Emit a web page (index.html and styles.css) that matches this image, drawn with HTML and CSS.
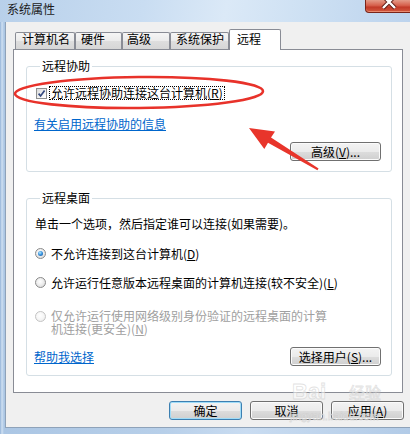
FILE: index.html
```html
<!DOCTYPE html>
<html lang="zh-CN">
<head>
<meta charset="utf-8">
<title>系统属性</title>
<link rel="stylesheet" href="styles.css">
</head>
<body>
<div class="window">
  <div class="titlebar">
    <span class="title">系统属性</span>
    <div class="close">
      <svg width="50" height="13" viewBox="0 0 50 13">
        <path d="M18 -4 L30 8 M30 -4 L18 8" stroke="#5a1a12" stroke-width="4.2" fill="none"/>
        <path d="M18 -4 L30 8 M30 -4 L18 8" stroke="#ffffff" stroke-width="2.4" fill="none"/>
      </svg>
    </div>
  </div>
  <div class="client">
    <div class="tabs">
      <div class="tab w1">计算机名</div>
      <div class="tab w2">硬件</div>
      <div class="tab w3">高级</div>
      <div class="tab w4">系统保护</div>
      <div class="tab w5 active">远程</div>
    </div>
    <div class="panel">
      <fieldset class="group g1">
        <legend>远程协助</legend>
        <div class="check-row">
          <span class="checkbox"><svg width="9" height="9" viewBox="0 0 9 9"><path d="M1.6 4.6 L3.6 7 L7.6 1.6" fill="none" stroke="#34497f" stroke-width="1.7"/></svg></span>
          <span class="focus">允许远程协助连接这台计算机(<u>R</u>)</span>
        </div>
        <a class="link l1" href="#">有关启用远程协助的信息</a>
        <div class="btn-row"><button class="btn adv">高级(<u>V</u>)...</button></div>
      </fieldset>
      <fieldset class="group g2">
        <legend>远程桌面</legend>
        <div class="hint">单击一个选项，然后指定谁可以连接(如果需要)。</div>
        <div class="radio-row r1"><span class="radio on"></span><span class="rlabel">不允许连接到这台计算机(<u>D</u>)</span></div>
        <div class="radio-row r2"><span class="radio"></span><span class="rlabel">允许运行任意版本远程桌面的计算机连接(较不安全)(<u>L</u>)</span></div>
        <div class="radio-row r3 disabled"><span class="radio"></span><span class="rlabel wrap">仅允许运行使用网络级别身份验证的远程桌面的计算机连接(更安全)(<u>N</u>)</span></div>
        <div class="bottom-row">
          <a class="link" href="#">帮助我选择</a>
          <button class="btn sel">选择用户(<u>S</u>)...</button>
        </div>
      </fieldset>
    </div>
    <div class="footer">
      <button class="btn fbtn default">确定</button>
      <button class="btn fbtn">取消</button>
      <button class="btn fbtn">应用(<u>A</u>)</button>
    </div>
  </div>
  <svg class="annot" width="410" height="434" viewBox="0 0 410 434">
    <ellipse cx="139" cy="92.5" rx="124" ry="15.5" fill="none" stroke="#e8322a" stroke-width="2.6" transform="rotate(-0.6 139 92.5)"/>
    <polygon points="249,128 275,131.5 271,137.6 318.6,168.4 317.4,170.2 268,142.8 264.3,149" fill="#e8352b"/>
    <g class="wm">
      <text x="292" y="399" class="wm-big">Bai</text>
      <text x="349" y="399" class="wm-cn">经验</text>
      <text x="290" y="420" class="wm-small">jingyan.baidu.com</text>
    </g>
  </svg>
</div>
</body>
</html>
```
FILE: styles.css
```css
html, body {
  margin: 0;
  padding: 0;
}
body {
  width: 410px;
  height: 434px;
  overflow: hidden;
  font-family: "Noto Sans CJK SC", "Noto Sans", sans-serif;
  font-size: 12px;
  color: #000;
}
.window {
  position: relative;
  width: 410px;
  height: 434px;
  display: flex;
  flex-direction: column;
  overflow: hidden;
  background: linear-gradient(90deg, #93b3d8 0px, #cfe0f2 2px, #abc6e4 4px, #b7cfe9 40%, #c9dcf1 60%, #b2cbe7 100%);
}
.titlebar {
  height: 22px;
  flex: none;
  display: flex;
  padding-left: 7px;
  overflow: hidden;
  background: linear-gradient(100deg, #b8d0ea 0%, #c9ddf2 35%, #dbe9f7 55%, #cde0f3 75%, #bcd3ed 100%);
}
.title {
  line-height: 14px;
  padding-top: 2px;
  color: #1b1b1b;
}
.close {
  margin-left: auto;
  margin-right: -5px;
  width: 50px;
  height: 13px;
  align-self: flex-start;
  box-sizing: border-box;
  border: 1px solid #7a2419;
  border-top: none;
  border-radius: 0 0 0 4px;
  background: linear-gradient(#e49b88 0%, #d6604c 45%, #c23a28 60%, #d25a40 100%);
  box-shadow: inset 0 -1px 0 #e88a70;
}
.close svg {
  display: block;
  margin-left: -1px;
}
.client {
  flex: 1;
  margin-left: 5px;
  margin-bottom: 6px;
  border-left: 1px solid #8ea2b9;
  border-bottom: 1px solid #8ea2b9;
  background: #f0f0f0;
  padding: 7px 7px 7px 7px;
  display: flex;
  flex-direction: column;
}
.tabs {
  display: flex;
  align-items: flex-end;
  height: 20px;
  padding-left: 2px;
}
.tab {
  box-sizing: border-box;
  height: 17px;
  border: 1px solid #898c95;
  border-bottom: none;
  border-radius: 2px 2px 0 0;
  background: linear-gradient(#f5f5f5 0%, #ebebeb 50%, #dedede 51%, #d6d6d6 100%);
  line-height: 12px;
  padding-left: 5px;
  white-space: nowrap;
}
.w1 { width: 60px; padding-left: 6px; }
.w2 { width: 47px; }
.w3 { width: 48px; padding-left: 4px; }
.w4 { width: 59px; }
.w5 { width: 52px; }
.tab.active {
  height: 21px;
  margin-bottom: -1px;
  background: #ffffff;
  position: relative;
  z-index: 1;
  padding-top: 3px;
  padding-left: 7px;
}
.panel {
  border: 1px solid #898c95;
  background: #ffffff;
  padding: 0 0 16px 0;
}
.group {
  margin: 0 10px 0 12px;
  padding: 0 10px 0 8px;
  border: 1px solid #d5dfe5;
  border-radius: 3px;
  min-width: 0;
}
.group legend {
  margin-left: 5px;
  padding: 0 2px;
  line-height: 12px;
}
.g1 {
  margin-top: 10px;
  padding-bottom: 10px;
}
.g2 {
  margin-top: 20px;
  padding-bottom: 9px;
}
.check-row {
  margin-top: 14px;
  height: 14px;
  display: flex;
  align-items: center;
}
.checkbox {
  width: 11px;
  height: 11px;
  box-sizing: border-box;
  margin-left: 1px;
  border: 1px solid #8e8f8f;
  background: linear-gradient(135deg, #d9d9d9 0%, #f4f4f4 60%, #ffffff 100%);
  display: flex;
  align-items: center;
  justify-content: center;
}
.checkbox svg {
  display: block;
}
.focus {
  margin-left: 2px;
  border: 1px dotted #000;
  padding: 0 1px;
  line-height: 12px;
  white-space: nowrap;
}
.link {
  display: block;
  color: #0066cc;
  text-decoration: underline;
  line-height: 14px;
  margin-left: -1px;
  width: max-content;
}
.l1 {
  margin-top: 17px;
}
.btn-row {
  margin-top: 11px;
  display: flex;
  justify-content: flex-end;
}
.btn {
  box-sizing: border-box;
  height: 19px;
  margin: 0;
  padding: 0;
  border: 1px solid #707070;
  border-radius: 3px;
  background: linear-gradient(#f3f3f3 0%, #ebebeb 50%, #dddddd 51%, #cfcfcf 100%);
  box-shadow: inset 0 0 0 1px #fbfbfb;
  font-family: "Noto Sans CJK SC", "Noto Sans", sans-serif;
  font-size: 12px;
  line-height: 14px;
  color: #000;
  white-space: nowrap;
}
.adv, .sel {
  width: 91px;
}
.hint {
  margin-top: 13px;
  line-height: 14px;
  white-space: nowrap;
}
.radio-row {
  display: flex;
  align-items: flex-start;
  line-height: 14px;
}
.r1 { margin-top: 16px; }
.r2 { margin-top: 15px; }
.r3 { margin-top: 19px; line-height: 13px; }
.radio {
  flex: none;
  width: 11px;
  height: 11px;
  box-sizing: border-box;
  margin-top: 1px;
  border-radius: 50%;
  border: 1px solid #8a8a8a;
  background: radial-gradient(circle at 45% 40%, #ffffff 0%, #f0f0f0 40%, #d2d2d2 100%);
  display: flex;
  align-items: center;
  justify-content: center;
}
.r3 .radio {
  margin-top: 2px;
}
.radio.on::after {
  content: "";
  width: 5px;
  height: 5px;
  border-radius: 50%;
  background: radial-gradient(circle at 40% 35%, #b8ecff 0%, #3b95e0 45%, #0d4d94 100%);
}
.rlabel {
  margin-left: 5px;
  white-space: nowrap;
}
.rlabel.wrap {
  white-space: normal;
  width: 280px;
}
.disabled {
  color: #a0a0a0;
}
.disabled .radio {
  border-color: #c4c4c4;
  background: radial-gradient(circle at 45% 40%, #ffffff 0%, #f6f6f6 50%, #e6e6e6 100%);
}
.bottom-row {
  margin-top: 12px;
  display: flex;
  align-items: center;
  justify-content: space-between;
}
.footer {
  margin-top: 8px;
  margin-right: -1px;
  display: flex;
  justify-content: flex-end;
  gap: 8px;
}
.fbtn {
  width: 73px;
}
.btn.default {
  border-color: #3c7fb1;
  box-shadow: inset 0 0 0 1px #9fdcf8;
}
.annot {
  position: absolute;
  left: 0;
  top: 0;
  pointer-events: none;
}
.wm text {
  fill: #ffffff;
  fill-opacity: 0.55;
  stroke: #c9c9c9;
  stroke-opacity: 0.55;
  stroke-width: 0.8;
}
.wm-big {
  font-family: "Liberation Sans", sans-serif;
  font-size: 22px;
  font-weight: bold;
}
.wm-cn {
  font-family: "Noto Sans CJK SC", sans-serif;
  font-size: 16px;
}
.wm-small {
  font-family: "Liberation Sans", sans-serif;
  font-size: 11px;
}
```
